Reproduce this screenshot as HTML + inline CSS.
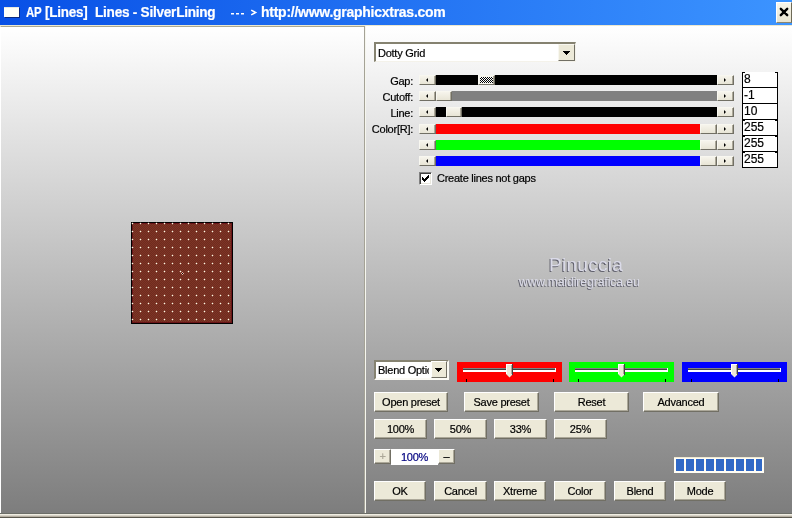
<!DOCTYPE html>
<html><head><meta charset="utf-8">
<style>
*{margin:0;padding:0;box-sizing:border-box}
html,body{width:792px;height:518px;overflow:hidden;will-change:transform;background:#ece9d8;font-family:"Liberation Sans",sans-serif;font-size:11px;color:#000;letter-spacing:-0.25px;-webkit-text-stroke:0.2px currentColor}
.a{position:absolute}
#title{left:0;top:0;width:792px;height:25px;background:linear-gradient(to right,#0850e6,#3c94ff)}
#title .t{top:4px;font-weight:bold;font-size:14px;color:#fff;white-space:pre}
#icon{left:4px;top:7px;width:15px;height:10px;background:#fffff8;border-top:1px solid #e8e8e0;box-shadow:1px 1px 0 #0a2a80}
#close{left:776px;top:2px;width:16px;height:21px;background:linear-gradient(#f8f6ec,#e8e4d0);border-top:1px solid #fff;border-left:1px solid #fff;border-right:1px solid #6e6a58;border-bottom:1px solid #8a8670}
#left{left:0;top:26px;width:364px;height:488px;background:linear-gradient(#ffffff,#7d7d7d);border-left:1px solid #fff;border-top:1px solid #aaa892}
#div1{left:364px;top:26px;width:1px;height:488px;background:#a4a296}
#div2{left:365px;top:26px;width:1px;height:488px;background:#f6f6ee}
#right{left:366px;top:26px;width:426px;height:488px;background:linear-gradient(#ffffff,#7d7d7d)}
#bot{left:0;top:513px;width:792px;height:5px;background:linear-gradient(#6c6e68 0 1px,#f0ede2 1px 2px,#d6d2c6 2px 3px,#b4ada0 3px 4px,#5a584e 4px 5px)}
#topline{left:0;top:25px;width:792px;height:1px;background:#ece8d0}
.btn{position:absolute;height:20px;background:#ece9d8;border-top:1px solid #fff;border-left:1px solid #fff;border-right:1px solid #716f64;border-bottom:1px solid #716f64;box-shadow:inset -1px -1px 0 #aca899;text-align:center;line-height:19px;font-size:11px;color:#000}
.lbl{position:absolute;text-align:right;width:62px;left:351px}
.arr{position:absolute;width:17px;height:10px;background:linear-gradient(#f6f4ec,#e8e5d6);border-top:1px solid #f8f7f0;border-left:1px solid #f8f7f0;border-right:1px solid #716f64;border-bottom:1px solid #716f64;box-shadow:inset -1px 0 0 #aca899}
.arr i{position:absolute;top:2px;left:7px;width:0;height:0;border-top:2px solid transparent;border-bottom:2px solid transparent}
.arr.l i{border-right:2px solid #000;left:6px}
.arr.r i{border-left:2px solid #000;left:6px}
.trk{position:absolute;height:10px}
.thm{position:absolute;width:16px;height:10px;background:linear-gradient(#f6f4ec,#e8e5d6);border-top:1px solid #f8f7f0;border-left:1px solid #f8f7f0;border-right:1px solid #716f64;border-bottom:1px solid #716f64;box-shadow:inset -1px 0 0 #aca899}
.tb{position:absolute;left:742px;width:36px;height:16px;background:#fff;border-left:1px solid #000;border-right:1px solid #000;border-bottom:1px solid #000;padding-left:1px;line-height:15px;font-size:12px;letter-spacing:0}
</style></head><body>
<div id="title" class="a">
  <div id="icon" class="a"></div>
  <div class="a t" style="left:26px;transform:scaleX(0.82);transform-origin:0 0">AP</div>
  <div class="a t" style="left:45px;transform:scaleX(0.96);transform-origin:0 0">[Lines]</div>
  <div class="a t" style="left:95px;transform:scaleX(0.97);transform-origin:0 0">Lines - SilverLining</div>
  <svg class="a" style="left:228px;top:8px" width="32" height="10"><path d="M3 5h3v1.6h-3zM8 5h3v1.6h-3zM13 5h3v1.6h-3z" fill="#fff"/><path d="M23.2 2.2L27.6 4.5L23.2 6.8" stroke="#fff" stroke-width="1.5" fill="none"/></svg>
  <div class="a t" style="left:261px;transform:scaleX(0.998);transform-origin:0 0">http://www.graphicxtras.com</div>
  <div id="close" class="a"></div>
  <svg class="a" style="left:778px;top:6px" width="12" height="12"><path d="M2.8 2.8L9.2 9.2M9.2 2.8L2.8 9.2" stroke="#000" stroke-width="2.4" stroke-linecap="round"/><circle cx="6" cy="6" r="2" fill="#000"/></svg>
</div>
<div id="topline" class="a"></div>
<div id="left" class="a"></div>
<div id="div1" class="a"></div>
<div id="div2" class="a"></div>
<div id="right" class="a"></div>
<div id="bot" class="a"></div>

<!-- preset combo -->
<div class="a" style="left:374px;top:42px;width:202px;height:20px;background:#fff;border-top:2px solid #858270;border-left:2px solid #858270;border-right:1px solid #f4f2ea;border-bottom:1px solid #f4f2ea"></div>
<div class="a" style="left:378px;top:47px;font-size:11px">Dotty Grid</div>
<div class="a" style="left:558px;top:44px;width:17px;height:17px;background:#ece9d8;border-top:1px solid #f8f7f0;border-left:1px solid #f8f7f0;border-right:1px solid #716f64;border-bottom:1px solid #716f64"></div>
<svg class="a" style="left:563px;top:51px" width="7" height="4" shape-rendering="crispEdges"><path d="M0 0h7v1h-7zM1 1h5v1h-5zM2 2h3v1h-3zM3 3h1v1h-1z" fill="#000"/></svg>

<!-- labels -->
<div class="lbl" style="top:75px">Gap:</div>
<div class="lbl" style="top:91px">Cutoff:</div>
<div class="lbl" style="top:107px">Line:</div>
<div class="lbl" style="top:123px">Color[R]:</div>

<!-- sliders -->
<div class="arr l" style="left:419px;top:75px"><i></i></div>
<div class="trk" style="left:436px;top:75px;width:281px;background:#000"></div>
<div class="thm" style="left:478px;top:75px;width:17px;background:#f4f3ec"></div>
<div class="a" style="left:480px;top:77px;width:13px;height:6px;background:repeating-conic-gradient(#000 0 25%,#fff 0 50%) 0 0/2px 2px"></div>
<div class="arr r" style="left:717px;top:75px"><i></i></div>

<div class="arr l" style="left:419px;top:91px"><i></i></div>
<div class="trk" style="left:436px;top:91px;width:281px;background:#808080"></div>
<div class="thm" style="left:436px;top:91px"></div>
<div class="arr r" style="left:717px;top:91px"><i></i></div>

<div class="arr l" style="left:419px;top:107px"><i></i></div>
<div class="trk" style="left:436px;top:107px;width:281px;background:#000"></div>
<div class="thm" style="left:446px;top:107px"></div>
<div class="arr r" style="left:717px;top:107px"><i></i></div>

<div class="arr l" style="left:419px;top:124px"><i></i></div>
<div class="trk" style="left:436px;top:124px;width:264px;background:#f00"></div>
<div class="thm" style="left:700px;top:124px;width:17px"></div>
<div class="arr r" style="left:717px;top:124px"><i></i></div>

<div class="arr l" style="left:419px;top:140px"><i></i></div>
<div class="trk" style="left:436px;top:140px;width:264px;background:#0f0"></div>
<div class="thm" style="left:700px;top:140px;width:17px"></div>
<div class="arr r" style="left:717px;top:140px"><i></i></div>

<div class="arr l" style="left:419px;top:156px"><i></i></div>
<div class="trk" style="left:436px;top:156px;width:264px;background:#00f"></div>
<div class="thm" style="left:700px;top:156px;width:17px"></div>
<div class="arr r" style="left:717px;top:156px"><i></i></div>

<!-- text boxes -->
<div class="tb" style="top:72px">8</div>
<div class="a" style="left:742px;top:72px;width:3px;height:1px;background:#000"></div><div class="a" style="left:775px;top:72px;width:3px;height:1px;background:#000"></div>
<div class="tb" style="top:88px">-1</div>
<div class="tb" style="top:104px">10</div>
<div class="tb" style="top:120px">255</div>
<div class="tb" style="top:136px">255</div>
<div class="tb" style="top:152px">255</div>
<div class="a" style="left:742px;top:120px;width:3px;height:1px;background:#000"></div><div class="a" style="left:775px;top:120px;width:3px;height:1px;background:#000"></div><div class="a" style="left:742px;top:136px;width:3px;height:1px;background:#000"></div><div class="a" style="left:775px;top:136px;width:3px;height:1px;background:#000"></div><div class="a" style="left:742px;top:152px;width:3px;height:1px;background:#000"></div><div class="a" style="left:775px;top:152px;width:3px;height:1px;background:#000"></div>

<!-- checkbox -->
<div class="a" style="left:419px;top:172px;width:13px;height:13px;background:#fff;border-top:1px solid #808080;border-left:1px solid #808080;border-right:1px solid #fff;border-bottom:1px solid #fff;box-shadow:inset 1px 1px 0 #404040,inset -1px -1px 0 #e8e6dc"></div>
<svg class="a" style="left:422px;top:175px" width="7" height="7" shape-rendering="crispEdges"><path d="M6 0h1v1h-1zM5 1h2v1h-2zM0 2h1v1h-1zM4 2h3v1h-3zM0 3h2v1h-2zM3 3h3v1h-3zM0 4h5v1h-5zM1 5h3v1h-3zM2 6h1v1h-1z" fill="#000"/></svg>
<div class="a" style="left:437px;top:172px">Create lines not gaps</div>

<!-- preview -->
<svg class="a" style="left:131px;top:222px" width="102" height="102" viewBox="131 222 102 102" shape-rendering="crispEdges">
<rect x="131" y="222" width="102" height="102" fill="#000"/>
<rect x="132" y="223" width="100" height="100" fill="#6a1418"/>
<defs><pattern id="tx" x="0" y="0" width="2" height="2" patternUnits="userSpaceOnUse"><rect width="2" height="2" fill="#712b1e"/><rect x="0" y="0" width="1" height="1" fill="#7c3526"/><rect x="1" y="1" width="1" height="1" fill="#7c3526"/></pattern></defs><rect x="133" y="224" width="98" height="98" fill="url(#tx)"/>
<path d="M133 223h1v1h-1zM132 224h1v1h-1zM131 223h1v1h-1zM132 222h1v1h-1zM133 231h1v1h-1zM132 232h1v1h-1zM131 231h1v1h-1zM132 230h1v1h-1zM133 239h1v1h-1zM132 240h1v1h-1zM131 239h1v1h-1zM132 238h1v1h-1zM133 247h1v1h-1zM132 248h1v1h-1zM131 247h1v1h-1zM132 246h1v1h-1zM133 255h1v1h-1zM132 256h1v1h-1zM131 255h1v1h-1zM132 254h1v1h-1zM133 263h1v1h-1zM132 264h1v1h-1zM131 263h1v1h-1zM132 262h1v1h-1zM133 271h1v1h-1zM132 272h1v1h-1zM131 271h1v1h-1zM132 270h1v1h-1zM133 279h1v1h-1zM132 280h1v1h-1zM131 279h1v1h-1zM132 278h1v1h-1zM133 287h1v1h-1zM132 288h1v1h-1zM131 287h1v1h-1zM132 286h1v1h-1zM133 295h1v1h-1zM132 296h1v1h-1zM131 295h1v1h-1zM132 294h1v1h-1zM133 303h1v1h-1zM132 304h1v1h-1zM131 303h1v1h-1zM132 302h1v1h-1zM133 311h1v1h-1zM132 312h1v1h-1zM131 311h1v1h-1zM132 310h1v1h-1zM133 319h1v1h-1zM132 320h1v1h-1zM131 319h1v1h-1zM132 318h1v1h-1zM141 223h1v1h-1zM140 224h1v1h-1zM139 223h1v1h-1zM140 222h1v1h-1zM141 231h1v1h-1zM140 232h1v1h-1zM139 231h1v1h-1zM140 230h1v1h-1zM141 239h1v1h-1zM140 240h1v1h-1zM139 239h1v1h-1zM140 238h1v1h-1zM141 247h1v1h-1zM140 248h1v1h-1zM139 247h1v1h-1zM140 246h1v1h-1zM141 255h1v1h-1zM140 256h1v1h-1zM139 255h1v1h-1zM140 254h1v1h-1zM141 263h1v1h-1zM140 264h1v1h-1zM139 263h1v1h-1zM140 262h1v1h-1zM141 271h1v1h-1zM140 272h1v1h-1zM139 271h1v1h-1zM140 270h1v1h-1zM141 279h1v1h-1zM140 280h1v1h-1zM139 279h1v1h-1zM140 278h1v1h-1zM141 287h1v1h-1zM140 288h1v1h-1zM139 287h1v1h-1zM140 286h1v1h-1zM141 295h1v1h-1zM140 296h1v1h-1zM139 295h1v1h-1zM140 294h1v1h-1zM141 303h1v1h-1zM140 304h1v1h-1zM139 303h1v1h-1zM140 302h1v1h-1zM141 311h1v1h-1zM140 312h1v1h-1zM139 311h1v1h-1zM140 310h1v1h-1zM141 319h1v1h-1zM140 320h1v1h-1zM139 319h1v1h-1zM140 318h1v1h-1zM149 223h1v1h-1zM148 224h1v1h-1zM147 223h1v1h-1zM148 222h1v1h-1zM149 231h1v1h-1zM148 232h1v1h-1zM147 231h1v1h-1zM148 230h1v1h-1zM149 239h1v1h-1zM148 240h1v1h-1zM147 239h1v1h-1zM148 238h1v1h-1zM149 247h1v1h-1zM148 248h1v1h-1zM147 247h1v1h-1zM148 246h1v1h-1zM149 255h1v1h-1zM148 256h1v1h-1zM147 255h1v1h-1zM148 254h1v1h-1zM149 263h1v1h-1zM148 264h1v1h-1zM147 263h1v1h-1zM148 262h1v1h-1zM149 271h1v1h-1zM148 272h1v1h-1zM147 271h1v1h-1zM148 270h1v1h-1zM149 279h1v1h-1zM148 280h1v1h-1zM147 279h1v1h-1zM148 278h1v1h-1zM149 287h1v1h-1zM148 288h1v1h-1zM147 287h1v1h-1zM148 286h1v1h-1zM149 295h1v1h-1zM148 296h1v1h-1zM147 295h1v1h-1zM148 294h1v1h-1zM149 303h1v1h-1zM148 304h1v1h-1zM147 303h1v1h-1zM148 302h1v1h-1zM149 311h1v1h-1zM148 312h1v1h-1zM147 311h1v1h-1zM148 310h1v1h-1zM149 319h1v1h-1zM148 320h1v1h-1zM147 319h1v1h-1zM148 318h1v1h-1zM157 223h1v1h-1zM156 224h1v1h-1zM155 223h1v1h-1zM156 222h1v1h-1zM157 231h1v1h-1zM156 232h1v1h-1zM155 231h1v1h-1zM156 230h1v1h-1zM157 239h1v1h-1zM156 240h1v1h-1zM155 239h1v1h-1zM156 238h1v1h-1zM157 247h1v1h-1zM156 248h1v1h-1zM155 247h1v1h-1zM156 246h1v1h-1zM157 255h1v1h-1zM156 256h1v1h-1zM155 255h1v1h-1zM156 254h1v1h-1zM157 263h1v1h-1zM156 264h1v1h-1zM155 263h1v1h-1zM156 262h1v1h-1zM157 271h1v1h-1zM156 272h1v1h-1zM155 271h1v1h-1zM156 270h1v1h-1zM157 279h1v1h-1zM156 280h1v1h-1zM155 279h1v1h-1zM156 278h1v1h-1zM157 287h1v1h-1zM156 288h1v1h-1zM155 287h1v1h-1zM156 286h1v1h-1zM157 295h1v1h-1zM156 296h1v1h-1zM155 295h1v1h-1zM156 294h1v1h-1zM157 303h1v1h-1zM156 304h1v1h-1zM155 303h1v1h-1zM156 302h1v1h-1zM157 311h1v1h-1zM156 312h1v1h-1zM155 311h1v1h-1zM156 310h1v1h-1zM157 319h1v1h-1zM156 320h1v1h-1zM155 319h1v1h-1zM156 318h1v1h-1zM165 223h1v1h-1zM164 224h1v1h-1zM163 223h1v1h-1zM164 222h1v1h-1zM165 231h1v1h-1zM164 232h1v1h-1zM163 231h1v1h-1zM164 230h1v1h-1zM165 239h1v1h-1zM164 240h1v1h-1zM163 239h1v1h-1zM164 238h1v1h-1zM165 247h1v1h-1zM164 248h1v1h-1zM163 247h1v1h-1zM164 246h1v1h-1zM165 255h1v1h-1zM164 256h1v1h-1zM163 255h1v1h-1zM164 254h1v1h-1zM165 263h1v1h-1zM164 264h1v1h-1zM163 263h1v1h-1zM164 262h1v1h-1zM165 271h1v1h-1zM164 272h1v1h-1zM163 271h1v1h-1zM164 270h1v1h-1zM165 279h1v1h-1zM164 280h1v1h-1zM163 279h1v1h-1zM164 278h1v1h-1zM165 287h1v1h-1zM164 288h1v1h-1zM163 287h1v1h-1zM164 286h1v1h-1zM165 295h1v1h-1zM164 296h1v1h-1zM163 295h1v1h-1zM164 294h1v1h-1zM165 303h1v1h-1zM164 304h1v1h-1zM163 303h1v1h-1zM164 302h1v1h-1zM165 311h1v1h-1zM164 312h1v1h-1zM163 311h1v1h-1zM164 310h1v1h-1zM165 319h1v1h-1zM164 320h1v1h-1zM163 319h1v1h-1zM164 318h1v1h-1zM173 223h1v1h-1zM172 224h1v1h-1zM171 223h1v1h-1zM172 222h1v1h-1zM173 231h1v1h-1zM172 232h1v1h-1zM171 231h1v1h-1zM172 230h1v1h-1zM173 239h1v1h-1zM172 240h1v1h-1zM171 239h1v1h-1zM172 238h1v1h-1zM173 247h1v1h-1zM172 248h1v1h-1zM171 247h1v1h-1zM172 246h1v1h-1zM173 255h1v1h-1zM172 256h1v1h-1zM171 255h1v1h-1zM172 254h1v1h-1zM173 263h1v1h-1zM172 264h1v1h-1zM171 263h1v1h-1zM172 262h1v1h-1zM173 271h1v1h-1zM172 272h1v1h-1zM171 271h1v1h-1zM172 270h1v1h-1zM173 279h1v1h-1zM172 280h1v1h-1zM171 279h1v1h-1zM172 278h1v1h-1zM173 287h1v1h-1zM172 288h1v1h-1zM171 287h1v1h-1zM172 286h1v1h-1zM173 295h1v1h-1zM172 296h1v1h-1zM171 295h1v1h-1zM172 294h1v1h-1zM173 303h1v1h-1zM172 304h1v1h-1zM171 303h1v1h-1zM172 302h1v1h-1zM173 311h1v1h-1zM172 312h1v1h-1zM171 311h1v1h-1zM172 310h1v1h-1zM173 319h1v1h-1zM172 320h1v1h-1zM171 319h1v1h-1zM172 318h1v1h-1zM181 223h1v1h-1zM180 224h1v1h-1zM179 223h1v1h-1zM180 222h1v1h-1zM181 231h1v1h-1zM180 232h1v1h-1zM179 231h1v1h-1zM180 230h1v1h-1zM181 239h1v1h-1zM180 240h1v1h-1zM179 239h1v1h-1zM180 238h1v1h-1zM181 247h1v1h-1zM180 248h1v1h-1zM179 247h1v1h-1zM180 246h1v1h-1zM181 255h1v1h-1zM180 256h1v1h-1zM179 255h1v1h-1zM180 254h1v1h-1zM181 263h1v1h-1zM180 264h1v1h-1zM179 263h1v1h-1zM180 262h1v1h-1zM181 271h1v1h-1zM180 272h1v1h-1zM179 271h1v1h-1zM180 270h1v1h-1zM181 279h1v1h-1zM180 280h1v1h-1zM179 279h1v1h-1zM180 278h1v1h-1zM181 287h1v1h-1zM180 288h1v1h-1zM179 287h1v1h-1zM180 286h1v1h-1zM181 295h1v1h-1zM180 296h1v1h-1zM179 295h1v1h-1zM180 294h1v1h-1zM181 303h1v1h-1zM180 304h1v1h-1zM179 303h1v1h-1zM180 302h1v1h-1zM181 311h1v1h-1zM180 312h1v1h-1zM179 311h1v1h-1zM180 310h1v1h-1zM181 319h1v1h-1zM180 320h1v1h-1zM179 319h1v1h-1zM180 318h1v1h-1zM189 223h1v1h-1zM188 224h1v1h-1zM187 223h1v1h-1zM188 222h1v1h-1zM189 231h1v1h-1zM188 232h1v1h-1zM187 231h1v1h-1zM188 230h1v1h-1zM189 239h1v1h-1zM188 240h1v1h-1zM187 239h1v1h-1zM188 238h1v1h-1zM189 247h1v1h-1zM188 248h1v1h-1zM187 247h1v1h-1zM188 246h1v1h-1zM189 255h1v1h-1zM188 256h1v1h-1zM187 255h1v1h-1zM188 254h1v1h-1zM189 263h1v1h-1zM188 264h1v1h-1zM187 263h1v1h-1zM188 262h1v1h-1zM189 271h1v1h-1zM188 272h1v1h-1zM187 271h1v1h-1zM188 270h1v1h-1zM189 279h1v1h-1zM188 280h1v1h-1zM187 279h1v1h-1zM188 278h1v1h-1zM189 287h1v1h-1zM188 288h1v1h-1zM187 287h1v1h-1zM188 286h1v1h-1zM189 295h1v1h-1zM188 296h1v1h-1zM187 295h1v1h-1zM188 294h1v1h-1zM189 303h1v1h-1zM188 304h1v1h-1zM187 303h1v1h-1zM188 302h1v1h-1zM189 311h1v1h-1zM188 312h1v1h-1zM187 311h1v1h-1zM188 310h1v1h-1zM189 319h1v1h-1zM188 320h1v1h-1zM187 319h1v1h-1zM188 318h1v1h-1zM197 223h1v1h-1zM196 224h1v1h-1zM195 223h1v1h-1zM196 222h1v1h-1zM197 231h1v1h-1zM196 232h1v1h-1zM195 231h1v1h-1zM196 230h1v1h-1zM197 239h1v1h-1zM196 240h1v1h-1zM195 239h1v1h-1zM196 238h1v1h-1zM197 247h1v1h-1zM196 248h1v1h-1zM195 247h1v1h-1zM196 246h1v1h-1zM197 255h1v1h-1zM196 256h1v1h-1zM195 255h1v1h-1zM196 254h1v1h-1zM197 263h1v1h-1zM196 264h1v1h-1zM195 263h1v1h-1zM196 262h1v1h-1zM197 271h1v1h-1zM196 272h1v1h-1zM195 271h1v1h-1zM196 270h1v1h-1zM197 279h1v1h-1zM196 280h1v1h-1zM195 279h1v1h-1zM196 278h1v1h-1zM197 287h1v1h-1zM196 288h1v1h-1zM195 287h1v1h-1zM196 286h1v1h-1zM197 295h1v1h-1zM196 296h1v1h-1zM195 295h1v1h-1zM196 294h1v1h-1zM197 303h1v1h-1zM196 304h1v1h-1zM195 303h1v1h-1zM196 302h1v1h-1zM197 311h1v1h-1zM196 312h1v1h-1zM195 311h1v1h-1zM196 310h1v1h-1zM197 319h1v1h-1zM196 320h1v1h-1zM195 319h1v1h-1zM196 318h1v1h-1zM205 223h1v1h-1zM204 224h1v1h-1zM203 223h1v1h-1zM204 222h1v1h-1zM205 231h1v1h-1zM204 232h1v1h-1zM203 231h1v1h-1zM204 230h1v1h-1zM205 239h1v1h-1zM204 240h1v1h-1zM203 239h1v1h-1zM204 238h1v1h-1zM205 247h1v1h-1zM204 248h1v1h-1zM203 247h1v1h-1zM204 246h1v1h-1zM205 255h1v1h-1zM204 256h1v1h-1zM203 255h1v1h-1zM204 254h1v1h-1zM205 263h1v1h-1zM204 264h1v1h-1zM203 263h1v1h-1zM204 262h1v1h-1zM205 271h1v1h-1zM204 272h1v1h-1zM203 271h1v1h-1zM204 270h1v1h-1zM205 279h1v1h-1zM204 280h1v1h-1zM203 279h1v1h-1zM204 278h1v1h-1zM205 287h1v1h-1zM204 288h1v1h-1zM203 287h1v1h-1zM204 286h1v1h-1zM205 295h1v1h-1zM204 296h1v1h-1zM203 295h1v1h-1zM204 294h1v1h-1zM205 303h1v1h-1zM204 304h1v1h-1zM203 303h1v1h-1zM204 302h1v1h-1zM205 311h1v1h-1zM204 312h1v1h-1zM203 311h1v1h-1zM204 310h1v1h-1zM205 319h1v1h-1zM204 320h1v1h-1zM203 319h1v1h-1zM204 318h1v1h-1zM213 223h1v1h-1zM212 224h1v1h-1zM211 223h1v1h-1zM212 222h1v1h-1zM213 231h1v1h-1zM212 232h1v1h-1zM211 231h1v1h-1zM212 230h1v1h-1zM213 239h1v1h-1zM212 240h1v1h-1zM211 239h1v1h-1zM212 238h1v1h-1zM213 247h1v1h-1zM212 248h1v1h-1zM211 247h1v1h-1zM212 246h1v1h-1zM213 255h1v1h-1zM212 256h1v1h-1zM211 255h1v1h-1zM212 254h1v1h-1zM213 263h1v1h-1zM212 264h1v1h-1zM211 263h1v1h-1zM212 262h1v1h-1zM213 271h1v1h-1zM212 272h1v1h-1zM211 271h1v1h-1zM212 270h1v1h-1zM213 279h1v1h-1zM212 280h1v1h-1zM211 279h1v1h-1zM212 278h1v1h-1zM213 287h1v1h-1zM212 288h1v1h-1zM211 287h1v1h-1zM212 286h1v1h-1zM213 295h1v1h-1zM212 296h1v1h-1zM211 295h1v1h-1zM212 294h1v1h-1zM213 303h1v1h-1zM212 304h1v1h-1zM211 303h1v1h-1zM212 302h1v1h-1zM213 311h1v1h-1zM212 312h1v1h-1zM211 311h1v1h-1zM212 310h1v1h-1zM213 319h1v1h-1zM212 320h1v1h-1zM211 319h1v1h-1zM212 318h1v1h-1zM221 223h1v1h-1zM220 224h1v1h-1zM219 223h1v1h-1zM220 222h1v1h-1zM221 231h1v1h-1zM220 232h1v1h-1zM219 231h1v1h-1zM220 230h1v1h-1zM221 239h1v1h-1zM220 240h1v1h-1zM219 239h1v1h-1zM220 238h1v1h-1zM221 247h1v1h-1zM220 248h1v1h-1zM219 247h1v1h-1zM220 246h1v1h-1zM221 255h1v1h-1zM220 256h1v1h-1zM219 255h1v1h-1zM220 254h1v1h-1zM221 263h1v1h-1zM220 264h1v1h-1zM219 263h1v1h-1zM220 262h1v1h-1zM221 271h1v1h-1zM220 272h1v1h-1zM219 271h1v1h-1zM220 270h1v1h-1zM221 279h1v1h-1zM220 280h1v1h-1zM219 279h1v1h-1zM220 278h1v1h-1zM221 287h1v1h-1zM220 288h1v1h-1zM219 287h1v1h-1zM220 286h1v1h-1zM221 295h1v1h-1zM220 296h1v1h-1zM219 295h1v1h-1zM220 294h1v1h-1zM221 303h1v1h-1zM220 304h1v1h-1zM219 303h1v1h-1zM220 302h1v1h-1zM221 311h1v1h-1zM220 312h1v1h-1zM219 311h1v1h-1zM220 310h1v1h-1zM221 319h1v1h-1zM220 320h1v1h-1zM219 319h1v1h-1zM220 318h1v1h-1zM229 223h1v1h-1zM228 224h1v1h-1zM227 223h1v1h-1zM228 222h1v1h-1zM229 231h1v1h-1zM228 232h1v1h-1zM227 231h1v1h-1zM228 230h1v1h-1zM229 239h1v1h-1zM228 240h1v1h-1zM227 239h1v1h-1zM228 238h1v1h-1zM229 247h1v1h-1zM228 248h1v1h-1zM227 247h1v1h-1zM228 246h1v1h-1zM229 255h1v1h-1zM228 256h1v1h-1zM227 255h1v1h-1zM228 254h1v1h-1zM229 263h1v1h-1zM228 264h1v1h-1zM227 263h1v1h-1zM228 262h1v1h-1zM229 271h1v1h-1zM228 272h1v1h-1zM227 271h1v1h-1zM228 270h1v1h-1zM229 279h1v1h-1zM228 280h1v1h-1zM227 279h1v1h-1zM228 278h1v1h-1zM229 287h1v1h-1zM228 288h1v1h-1zM227 287h1v1h-1zM228 286h1v1h-1zM229 295h1v1h-1zM228 296h1v1h-1zM227 295h1v1h-1zM228 294h1v1h-1zM229 303h1v1h-1zM228 304h1v1h-1zM227 303h1v1h-1zM228 302h1v1h-1zM229 311h1v1h-1zM228 312h1v1h-1zM227 311h1v1h-1zM228 310h1v1h-1zM229 319h1v1h-1zM228 320h1v1h-1zM227 319h1v1h-1zM228 318h1v1h-1z" fill="#e8d8c0" opacity="0.25"/>
<path d="M181 273h1v1h-1zM183 273h1v1h-1zM182 272h1v1h-1zM182 274h1v1h-1z" fill="#e8b0a0"/><path d="M182 273h1v1h-1z" fill="#000"/>
<path d="M132 223h1v1h-1zM132 231h1v1h-1zM132 239h1v1h-1zM132 247h1v1h-1zM132 255h1v1h-1zM132 263h1v1h-1zM132 271h1v1h-1zM132 279h1v1h-1zM132 287h1v1h-1zM132 295h1v1h-1zM132 303h1v1h-1zM132 311h1v1h-1zM132 319h1v1h-1zM140 223h1v1h-1zM140 231h1v1h-1zM140 239h1v1h-1zM140 247h1v1h-1zM140 255h1v1h-1zM140 263h1v1h-1zM140 271h1v1h-1zM140 279h1v1h-1zM140 287h1v1h-1zM140 295h1v1h-1zM140 303h1v1h-1zM140 311h1v1h-1zM140 319h1v1h-1zM148 223h1v1h-1zM148 231h1v1h-1zM148 239h1v1h-1zM148 247h1v1h-1zM148 255h1v1h-1zM148 263h1v1h-1zM148 271h1v1h-1zM148 279h1v1h-1zM148 287h1v1h-1zM148 295h1v1h-1zM148 303h1v1h-1zM148 311h1v1h-1zM148 319h1v1h-1zM156 223h1v1h-1zM156 231h1v1h-1zM156 239h1v1h-1zM156 247h1v1h-1zM156 255h1v1h-1zM156 263h1v1h-1zM156 271h1v1h-1zM156 279h1v1h-1zM156 287h1v1h-1zM156 295h1v1h-1zM156 303h1v1h-1zM156 311h1v1h-1zM156 319h1v1h-1zM164 223h1v1h-1zM164 231h1v1h-1zM164 239h1v1h-1zM164 247h1v1h-1zM164 255h1v1h-1zM164 263h1v1h-1zM164 271h1v1h-1zM164 279h1v1h-1zM164 287h1v1h-1zM164 295h1v1h-1zM164 303h1v1h-1zM164 311h1v1h-1zM164 319h1v1h-1zM172 223h1v1h-1zM172 231h1v1h-1zM172 239h1v1h-1zM172 247h1v1h-1zM172 255h1v1h-1zM172 263h1v1h-1zM172 271h1v1h-1zM172 279h1v1h-1zM172 287h1v1h-1zM172 295h1v1h-1zM172 303h1v1h-1zM172 311h1v1h-1zM172 319h1v1h-1zM180 223h1v1h-1zM180 231h1v1h-1zM180 239h1v1h-1zM180 247h1v1h-1zM180 255h1v1h-1zM180 263h1v1h-1zM180 271h1v1h-1zM180 279h1v1h-1zM180 287h1v1h-1zM180 295h1v1h-1zM180 303h1v1h-1zM180 311h1v1h-1zM180 319h1v1h-1zM188 223h1v1h-1zM188 231h1v1h-1zM188 239h1v1h-1zM188 247h1v1h-1zM188 255h1v1h-1zM188 263h1v1h-1zM188 271h1v1h-1zM188 279h1v1h-1zM188 287h1v1h-1zM188 295h1v1h-1zM188 303h1v1h-1zM188 311h1v1h-1zM188 319h1v1h-1zM196 223h1v1h-1zM196 231h1v1h-1zM196 239h1v1h-1zM196 247h1v1h-1zM196 255h1v1h-1zM196 263h1v1h-1zM196 271h1v1h-1zM196 279h1v1h-1zM196 287h1v1h-1zM196 295h1v1h-1zM196 303h1v1h-1zM196 311h1v1h-1zM196 319h1v1h-1zM204 223h1v1h-1zM204 231h1v1h-1zM204 239h1v1h-1zM204 247h1v1h-1zM204 255h1v1h-1zM204 263h1v1h-1zM204 271h1v1h-1zM204 279h1v1h-1zM204 287h1v1h-1zM204 295h1v1h-1zM204 303h1v1h-1zM204 311h1v1h-1zM204 319h1v1h-1zM212 223h1v1h-1zM212 231h1v1h-1zM212 239h1v1h-1zM212 247h1v1h-1zM212 255h1v1h-1zM212 263h1v1h-1zM212 271h1v1h-1zM212 279h1v1h-1zM212 287h1v1h-1zM212 295h1v1h-1zM212 303h1v1h-1zM212 311h1v1h-1zM212 319h1v1h-1zM220 223h1v1h-1zM220 231h1v1h-1zM220 239h1v1h-1zM220 247h1v1h-1zM220 255h1v1h-1zM220 263h1v1h-1zM220 271h1v1h-1zM220 279h1v1h-1zM220 287h1v1h-1zM220 295h1v1h-1zM220 303h1v1h-1zM220 311h1v1h-1zM220 319h1v1h-1zM228 223h1v1h-1zM228 231h1v1h-1zM228 239h1v1h-1zM228 247h1v1h-1zM228 255h1v1h-1zM228 263h1v1h-1zM228 271h1v1h-1zM228 279h1v1h-1zM228 287h1v1h-1zM228 295h1v1h-1zM228 303h1v1h-1zM228 311h1v1h-1zM228 319h1v1h-1z" fill="#fffbe8"/>
</svg>

<!-- watermark -->
<div class="a" style="left:549px;top:254px;font-size:19px;letter-spacing:0.3px;-webkit-text-stroke:0;color:#dadae8;text-shadow:-1px 1px 0 #62626e">Pinuccia</div>
<div class="a" style="left:519px;top:275px;font-size:12px;letter-spacing:0;-webkit-text-stroke:0;color:#dadae8;text-shadow:-1px 1px 0 #62626e">www.maidiregrafica.eu</div>

<!-- blend combo -->
<div class="a" style="left:374px;top:360px;width:75px;height:20px;background:#fff;border-top:2px solid #858270;border-left:2px solid #858270;border-right:2px solid #fbfaf4;border-bottom:2px solid #fbfaf4"></div>
<div class="a" style="left:378px;top:364px;width:51px;overflow:hidden;white-space:nowrap">Blend Options</div>
<div class="a" style="left:431px;top:361px;width:16px;height:17px;background:#ece9d8;border-top:1px solid #fff;border-left:1px solid #fff;border-right:1px solid #716f64;border-bottom:1px solid #716f64"></div>
<svg class="a" style="left:435px;top:368px" width="7" height="4" shape-rendering="crispEdges"><path d="M0 0h7v1h-7zM1 1h5v1h-5zM2 2h3v1h-3zM3 3h1v1h-1z" fill="#000"/></svg>

<!-- color panels -->
<svg class="a" style="left:457px;top:362px" width="105" height="20" shape-rendering="crispEdges">
<rect x="0" y="0" width="105" height="20" fill="#f00"/>
<rect x="6" y="6" width="93" height="1" fill="#808080"/>
<rect x="6" y="7" width="92" height="1" fill="#404040"/>
<rect x="6" y="8" width="93" height="2" fill="#ffffff"/>
<rect x="98" y="6" width="1" height="2" fill="#ffffff"/>
<rect x="9" y="17" width="1" height="3" fill="#000"/>
<rect x="96" y="17" width="1" height="3" fill="#000"/>
<polygon points="49,2 56,2 56,12 52.5,15.5 49,12" fill="#ece9d8" shape-rendering="geometricPrecision"/>
<path d="M49 2h6v1h-6zM49 2h1v10h-1z" fill="#ffffff"/>
<path d="M55 2h1v11h-1z" fill="#404040"/>
<path d="M54 3h1v9h-1z" fill="#aca899"/>
</svg>
<svg class="a" style="left:569px;top:362px" width="105" height="20" shape-rendering="crispEdges">
<rect x="0" y="0" width="105" height="20" fill="#0f0"/>
<rect x="6" y="6" width="93" height="1" fill="#808080"/>
<rect x="6" y="7" width="92" height="1" fill="#404040"/>
<rect x="6" y="8" width="93" height="2" fill="#ffffff"/>
<rect x="98" y="6" width="1" height="2" fill="#ffffff"/>
<rect x="9" y="17" width="1" height="3" fill="#000"/>
<rect x="96" y="17" width="1" height="3" fill="#000"/>
<polygon points="49,2 56,2 56,12 52.5,15.5 49,12" fill="#ece9d8" shape-rendering="geometricPrecision"/>
<path d="M49 2h6v1h-6zM49 2h1v10h-1z" fill="#ffffff"/>
<path d="M55 2h1v11h-1z" fill="#404040"/>
<path d="M54 3h1v9h-1z" fill="#aca899"/>
</svg>
<svg class="a" style="left:682px;top:362px" width="105" height="20" shape-rendering="crispEdges">
<rect x="0" y="0" width="105" height="20" fill="#00f"/>
<rect x="6" y="6" width="93" height="1" fill="#808080"/>
<rect x="6" y="7" width="92" height="1" fill="#404040"/>
<rect x="6" y="8" width="93" height="2" fill="#ffffff"/>
<rect x="98" y="6" width="1" height="2" fill="#ffffff"/>
<rect x="9" y="17" width="1" height="3" fill="#000"/>
<rect x="96" y="17" width="1" height="3" fill="#000"/>
<polygon points="49,2 56,2 56,12 52.5,15.5 49,12" fill="#ece9d8" shape-rendering="geometricPrecision"/>
<path d="M49 2h6v1h-6zM49 2h1v10h-1z" fill="#ffffff"/>
<path d="M55 2h1v11h-1z" fill="#404040"/>
<path d="M54 3h1v9h-1z" fill="#aca899"/>
</svg>

<!-- buttons -->
<div class="btn" style="left:374px;top:392px;width:74px">Open preset</div>
<div class="btn" style="left:464px;top:392px;width:75px">Save preset</div>
<div class="btn" style="left:554px;top:392px;width:75px">Reset</div>
<div class="btn" style="left:643px;top:392px;width:76px">Advanced</div>

<div class="btn" style="left:374px;top:419px;width:53px">100%</div>
<div class="btn" style="left:434px;top:419px;width:53px">50%</div>
<div class="btn" style="left:494px;top:419px;width:53px">33%</div>
<div class="btn" style="left:554px;top:419px;width:53px">25%</div>

<div class="btn" style="left:374px;top:449px;width:17px;height:15px;line-height:13px;color:#aca899">+</div>
<div class="a" style="left:391px;top:449px;width:47px;height:16px;background:#fff;color:#000080;text-align:center;line-height:16px">100%</div>
<div class="btn" style="left:438px;top:449px;width:17px;height:15px;line-height:13px">&#8211;</div>

<svg class="a" style="left:674px;top:457px" width="90" height="16" shape-rendering="crispEdges"><rect x="0" y="0" width="90" height="16" fill="#fffdf5"/><rect x="0" y="0" width="90" height="1" fill="#f0e8d0"/><rect x="2" y="2" width="8" height="12" fill="#3169c6"/><rect x="12" y="2" width="8" height="12" fill="#3169c6"/><rect x="22" y="2" width="8" height="12" fill="#3169c6"/><rect x="32" y="2" width="8" height="12" fill="#3169c6"/><rect x="42" y="2" width="8" height="12" fill="#3169c6"/><rect x="52" y="2" width="8" height="12" fill="#3169c6"/><rect x="62" y="2" width="8" height="12" fill="#3169c6"/><rect x="72" y="2" width="8" height="12" fill="#3169c6"/><rect x="82" y="2" width="6" height="12" fill="#3169c6"/></svg>

<div class="btn" style="left:374px;top:481px;width:52px">OK</div>
<div class="btn" style="left:434px;top:481px;width:53px">Cancel</div>
<div class="btn" style="left:494px;top:481px;width:52px">Xtreme</div>
<div class="btn" style="left:554px;top:481px;width:52px">Color</div>
<div class="btn" style="left:614px;top:481px;width:52px">Blend</div>
<div class="btn" style="left:674px;top:481px;width:52px">Mode</div>
</body></html>
